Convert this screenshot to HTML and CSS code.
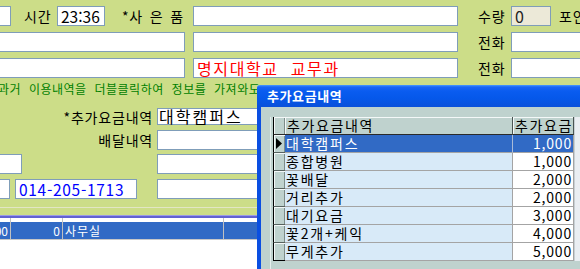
FILE: index.html
```html
<!DOCTYPE html>
<html lang="ko">
<head>
<meta charset="utf-8">
<title>추가요금내역</title>
<link rel="stylesheet" href="styles.css">
</head>
<body>
<div class="form">
  <div class="row">
    <span class="inp edge w-a"></span>
    <span class="lbl l-time">시간</span>
    <span class="inp time">23:36</span>
    <span class="lbl l-gift">*사 은 품</span>
    <span class="inp mid m10"></span>
    <span class="lbl l-right">수량</span>
    <span class="inp qty">0</span>
    <span class="lbl l-point">포인</span>
  </div>
  <div class="row gap-r">
    <span class="inp edge w-b"></span>
    <span class="inp mid m8"></span>
    <span class="lbl l-right">전화</span>
    <span class="inp phone"></span>
  </div>
  <div class="row gap-r">
    <span class="inp edge w-b"></span>
    <span class="inp mid m8 red">명지대학교  교무과</span>
    <span class="lbl l-right">전화</span>
    <span class="inp phone"></span>
  </div>
  <div class="hint">과거 이용내역을 더블클릭하여 정보를 가져와도</div>
  <div class="row r5">
    <div class="lcol lcol-right"><span class="lbl">*추가요금내역</span></div>
    <span class="inp fee">대학캠퍼스</span>
  </div>
  <div class="row r6">
    <div class="lcol lcol-right"><span class="lbl">배달내역</span></div>
    <span class="inp fee"></span>
  </div>
  <div class="row r7">
    <div class="lcol"><span class="inp edge w-c"></span></div>
    <span class="inp fee"></span>
  </div>
  <div class="row r8">
    <div class="lcol"><span class="inp edge w-d"></span><span class="inp tel">014-205-1713</span></div>
    <span class="inp fee"></span>
  </div>
  <div class="split"></div>
  <div class="list">
    <div class="list-head">
      <span class="lc c1"></span><span class="lc c2"></span><span class="lc c3"></span><span class="lc c4"></span>
    </div>
    <div class="list-row">
      <span class="lc c1">00</span><span class="lc c2">0</span><span class="lc c3">사무실</span><span class="lc c4"></span>
    </div>
  </div>
</div>

<div class="dlg">
  <div class="dlg-title">추가요금내역</div>
  <div class="dlg-body">
    <div class="sub">
      <div class="grid">
        <div class="table">
          <div class="g-row g-head"><span class="g-sel"></span><span class="g-name">추가요금내역</span><span class="g-amt">추가요금</span></div>
          <div class="g-row g-cur"><span class="g-sel"><svg width="6" height="11" viewBox="0 0 6 11"><polygon points="0,0 6,5.5 0,11" fill="#000"/></svg></span><span class="g-name">대학캠퍼스</span><span class="g-amt">1,000</span></div>
          <div class="g-row"><span class="g-sel"></span><span class="g-name">종합병원</span><span class="g-amt">1,000</span></div>
          <div class="g-row"><span class="g-sel"></span><span class="g-name">꽃배달</span><span class="g-amt">2,000</span></div>
          <div class="g-row"><span class="g-sel"></span><span class="g-name">거리추가</span><span class="g-amt">2,000</span></div>
          <div class="g-row"><span class="g-sel"></span><span class="g-name">대기요금</span><span class="g-amt">3,000</span></div>
          <div class="g-row"><span class="g-sel"></span><span class="g-name">꽃2개+케익</span><span class="g-amt">4,000</span></div>
          <div class="g-row g-last"><span class="g-sel"></span><span class="g-name">무게추가</span><span class="g-amt">5,000</span></div>
        </div>
        <div class="scroll"></div>
      </div>
    </div>
  </div>
</div>
</body>
</html>
```

FILE: styles.css
```css
* { box-sizing: border-box; }
html, body { margin: 0; padding: 0; }
body {
  width: 580px;
  height: 269px;
  overflow: hidden;
  position: relative;
  background: #ccdd88;
  font-family: "Noto Sans CJK KR", "Noto Sans", sans-serif;
  color: #000;
}

.form { padding-top: 6px; }

.row { display: flex; align-items: center; height: 20px; }
.gap-r { margin-top: 6px; }

.inp {
  flex: none;
  height: 20px;
  border: 1px solid #7f9db9;
  background: #fff;
  display: flex;
  align-items: center;
  padding-left: 3px;
  font-size: 16px;
  line-height: 18px;
  white-space: pre;
}
.lbl { flex: none; font-size: 14px; line-height: 20px; white-space: nowrap; letter-spacing: 0.8px; }

.edge { margin-left: -1px; }
.w-a { width: 12px; }
.w-b { width: 186px; }
.w-c { width: 23px; }
.w-d { width: 11px; }

.l-time { margin-left: 13px; width: 28px; }
.time { margin-left: 5px; width: 48px; font-size: 15.5px; padding-left: 3px; }
.l-gift { margin-left: 17px; width: 61px; word-spacing: 2px; }
.mid { width: 265px; }
.m10 { margin-left: 10px; }
.m8 { margin-left: 8px; }
.l-right { margin-left: 20px; width: 28px; }
.qty { margin-left: 5px; width: 40px; background: #ece9d8; color: #222; }
.l-point { margin-left: 8px; }
.phone { margin-left: 5px; width: 90px; }
.red { color: #ff0000; padding-left: 3px; letter-spacing: 1.6px; }

.hint {
  margin-top: 2px;
  margin-left: -2px;
  height: 17px;
  line-height: 17px;
  font-size: 12px;
  color: #008000;
  white-space: nowrap;
  letter-spacing: 0.5px;
  word-spacing: 4px;
}

.lcol { flex: none; width: 152px; display: flex; align-items: center; }
.lcol-right { justify-content: flex-end; }
.lcol-right .lbl { margin-right: -1px; }
.fee { margin-left: 5px; width: 104px; padding-left: 1px; }
.r5 { margin-top: 11px; height: 17px; }
.r5 .fee { height: 17px; font-size: 16px; line-height: 15px; letter-spacing: 2px; }
.r6 { margin-top: 5px; }
.r7 { margin-top: 4px; }
.r8 { margin-top: 5px; }
.tel { margin-left: 5px; width: 122px; color: #0000ff; font-size: 15.5px; letter-spacing: 0.7px; }

.split { margin-top: 8px; height: 1px; background: #e2e6c4; }
.list {
  margin-top: 7px;
  height: 60px;
  background: #fff;
  border-top: 1px solid #9a9ae6;
  box-shadow: inset 0 2px 0 #6262d2;
  padding-top: 2px;
}
.list-head, .list-row { display: flex; }
.list-head { height: 4px; }
.list-row {
  height: 18px;
  background: #316ac5;
  color: #fff;
  font-size: 12px;
  line-height: 17px;
  border-bottom: 1px solid #c8c8c8;
}
.lc { flex: none; border-right: 1px solid #c0c0c0; white-space: nowrap; }
.c1 { width: 12px; margin-left: -1px; display: flex; justify-content: flex-end; padding-right: 2px; }
.c2 { width: 52px; text-align: right; padding-right: 2px; }
.c3 { width: 161px; padding-left: 2px; letter-spacing: 1px; }
.c4 { width: 60px; }

.dlg {
  position: absolute;
  left: 257px;
  top: 85px;
  width: 330px;
  height: 190px;
  display: flex;
  flex-direction: column;
  z-index: 2;
}
.dlg-title {
  flex: none;
  height: 22px;
  padding-left: 10px;
  color: #fff;
  font-size: 13px;
  font-weight: bold;
  line-height: 22px;
  letter-spacing: 0.6px;
  background: linear-gradient(to bottom, #4a9cff 0, #1a66f4 2px, #0a5cf0 6px, #0558ea 60%, #0a50da 100%);
  border-top-left-radius: 3px;
}
.dlg-body {
  flex: 1;
  background: #bfd2ce;
  border-left: 4px solid #0a4fe2;
  padding: 10px 0 0 9px;
}
.sub { border-left: 1px solid #e4eeec; padding-left: 2px; height: 100%; }
.grid { display: flex; }
.table { flex: none; width: 301px; }
.scroll { flex: none; width: 10px; height: 144px; background: #eaeef2; border-left: 1px solid #c8d0d4; }

.g-row { display: flex; height: 18px; font-size: 14px; line-height: 17px; }
.g-sel {
  flex: none;
  width: 12px;
  border-left: 1px solid #000;
  border-bottom: 1px solid #56625f;
  background: #bfd2ce;
  box-shadow: inset 1px 1px 0 #f4f8f8, inset -1px 0 0 #7d8c89;
  display: flex;
  align-items: center;
  padding-left: 2px;
}
.g-name {
  flex: none;
  width: 228px;
  padding-left: 1px;
  background: #d8eaf8;
  border-right: 1px solid #a4a4a4;
  border-bottom: 1px solid #a4a4a4;
  white-space: nowrap;
  letter-spacing: 1.8px;
}
.g-amt {
  flex: none;
  width: 61px;
  text-align: right;
  padding-right: 1px;
  background: #fff;
  border-right: 1px solid #a4a4a4;
  border-bottom: 1px solid #a4a4a4;
  letter-spacing: 0.8px;
  white-space: nowrap;
}
.g-head .g-name, .g-head .g-amt {
  background: #bfd2ce;
  letter-spacing: 1.6px;
  text-align: left;
  padding-left: 2px;
  box-shadow: inset 1px 1px 0 #f4f8f8;
  border-right: 1px solid #4a5553;
  border-bottom: 1px solid #2a2a2a;
}
.g-head .g-sel { border-bottom-color: #2a2a2a; }
.g-cur .g-name, .g-cur .g-amt { background: #316ac5; color: #fff; }
.g-cur .g-name { border-right-color: #a9bbd8; }
.g-last .g-sel { border-bottom-color: #000; }
```
